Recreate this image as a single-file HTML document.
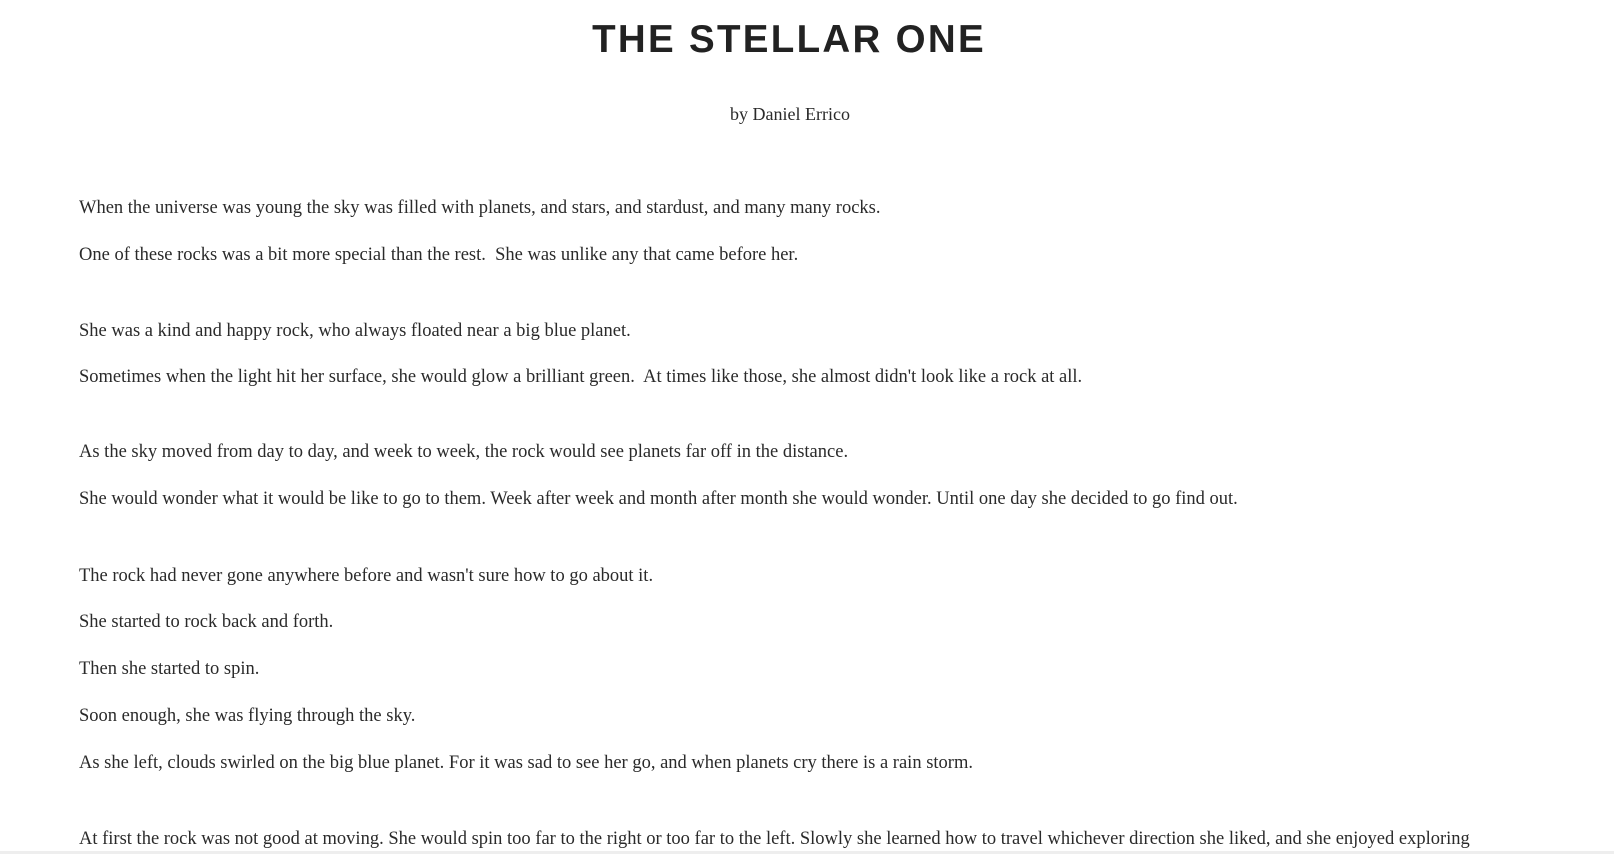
<!DOCTYPE html>
<html><head><meta charset="utf-8"><style>
html,body{margin:0;padding:0;background:#fff;width:1614px;height:854px;overflow:hidden;}
body{font-family:"Liberation Serif",serif;color:#2a2a2a;position:relative;}
h1{position:absolute;left:0;width:1578px;top:15px;margin:0;text-align:center;font-family:"Liberation Sans",sans-serif;font-weight:bold;font-size:38.5px;letter-spacing:2.3px;color:#222;line-height:50px;}
.by{position:absolute;left:0;width:1580px;top:100px;text-align:center;font-size:18px;line-height:28px;}
.l{position:absolute;left:79px;font-size:18.5px;line-height:28px;white-space:nowrap;}
.bar{position:absolute;left:0;right:0;top:851px;height:3px;background:#eee;}
</style></head><body>
<h1>THE STELLAR ONE</h1>
<div class="by">by Daniel Errico</div>
<div class="l" style="top:194px">When the universe was young the sky was filled with planets, and stars, and stardust, and many many rocks.</div>
<div class="l" style="top:241px">One of these rocks was a bit more special than the rest.&nbsp; She was unlike any that came before her.</div>
<div class="l" style="top:317px">She was a kind and happy rock, who always floated near a big blue planet.</div>
<div class="l" style="top:363px">Sometimes when the light hit her surface, she would glow a brilliant green.&nbsp; At times like those, she almost didn't look like a rock at all.</div>
<div class="l" style="top:438px">As the sky moved from day to day, and week to week, the rock would see planets far off in the distance.</div>
<div class="l" style="top:485px">She would wonder what it would be like to go to them. Week after week and month after month she would wonder. Until one day she decided to go find out.</div>
<div class="l" style="top:562px">The rock had never gone anywhere before and wasn't sure how to go about it.</div>
<div class="l" style="top:608px">She started to rock back and forth.</div>
<div class="l" style="top:655px">Then she started to spin.</div>
<div class="l" style="top:702px">Soon enough, she was flying through the sky.</div>
<div class="l" style="top:749px">As she left, clouds swirled on the big blue planet. For it was sad to see her go, and when planets cry there is a rain storm.</div>
<div class="l" style="top:825px">At first the rock was not good at moving. She would spin too far to the right or too far to the left. Slowly she learned how to travel whichever direction she liked, and she enjoyed exploring</div>
<div class="bar"></div>
</body></html>
